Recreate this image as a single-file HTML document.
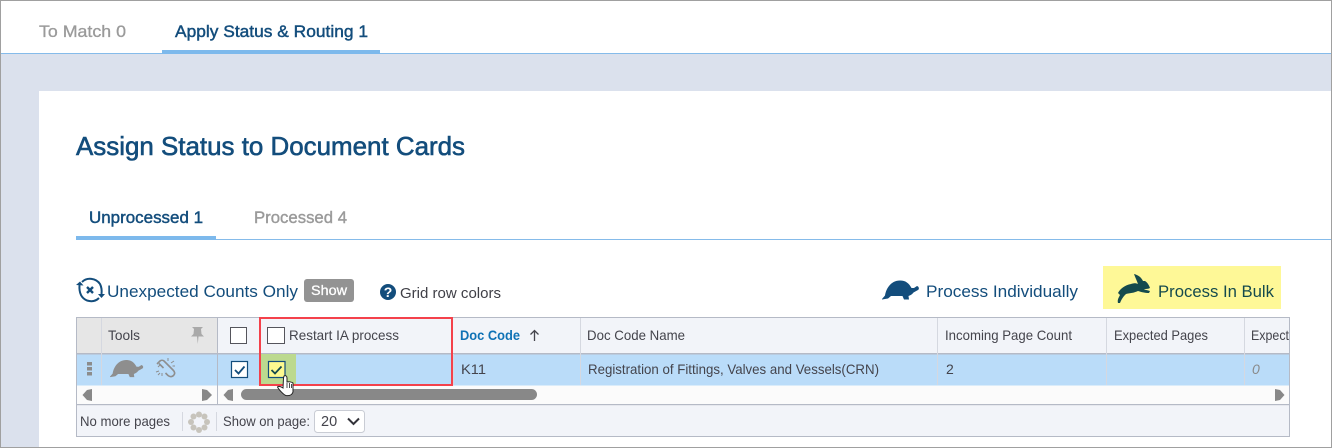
<!DOCTYPE html>
<html><head><meta charset="utf-8"><style>
html,body{margin:0;padding:0;background:#fff;overflow:hidden}
svg{display:block}
text{font-family:"Liberation Sans",sans-serif}
</style></head><body>
<svg xmlns="http://www.w3.org/2000/svg" width="1332" height="448" viewBox="0 0 1332 448">
<defs>
<path id="turtle" d="M0 18.500 L3 15 C4 8 9 0 18 0 C24 0 27 3 29.500 7.500 L32 7.500 L35 5.500 C37 6 37.500 8.500 36 9.500 L31.500 12 C30 14 28 15 26.500 15.500 L27 19 L22 19 L20.500 15.500 L9 15.500 L6 18 L0 19 Z"/>
<path id="rabbit" d="M2 29 C1 26 3 23 4 21 L2 19 C4 15 9 11 15 10 C18 9 20 9 22 10 C21 7 19 3 18 0 C22 1 25 3 27 7 L29 7 C31 8 33 11 34 14 C32 15 30 15 28 15 C29 16 31 16 34 17 L33 19 C29 19 25 18 22 17 C18 19 14 19 10 20 C8 22 6 24 4 29 Z"/>
</defs>
<rect width="1332" height="448" fill="#fff"/>
<!-- band -->
<rect x="0" y="54" width="1332" height="394" fill="#dbe1ed"/>
<rect x="39" y="91" width="1293" height="357" fill="#fff"/>
<rect x="0" y="53" width="1332" height="1" fill="#85bbea"/>
<rect x="162" y="50" width="218" height="4" fill="#7db9ec"/>
<!-- window border -->
<rect x="0.500" y="0.500" width="1331" height="447" fill="none" stroke="#a0a0a0"/>
<!-- top tabs -->
<text x="39" y="37" font-size="17" fill="#9a9a9a" stroke="#9a9a9a" stroke-width=".3" textLength="87" lengthAdjust="spacingAndGlyphs">To Match 0</text>
<text x="175" y="37" font-size="17" fill="#134d7c" stroke="#134d7c" stroke-width=".45" textLength="193" lengthAdjust="spacingAndGlyphs">Apply Status &amp; Routing 1</text>
<!-- title -->
<text x="76" y="155" font-size="26" fill="#134d7c" stroke="#134d7c" stroke-width=".6" textLength="389" lengthAdjust="spacingAndGlyphs">Assign Status to Document Cards</text>
<!-- subtabs -->
<rect x="76" y="239" width="1255" height="1" fill="#85bbea"/>
<rect x="76" y="236" width="140" height="4" fill="#7db9ec"/>
<text x="89" y="223" font-size="17" fill="#134d7c" stroke="#134d7c" stroke-width=".45" textLength="114" lengthAdjust="spacingAndGlyphs">Unprocessed 1</text>
<text x="254" y="223" font-size="17" fill="#9a9a9a" stroke="#9a9a9a" stroke-width=".4" textLength="93" lengthAdjust="spacingAndGlyphs">Processed 4</text>
<!-- toolbar left -->
<g fill="none" stroke="#134d7c" stroke-width="2">
<path d="M79.500 285 C79 292 81 298 87 300.500 C92 302 96 301 99 298"/>
<path d="M82 282 C87 277 96 278 100 284 C101.500 287 102 290 101.500 294"/>
</g>
<path d="M76 285 L80 281.500 L83.500 285.500 Z M98 294 L105 294 L101.500 298 Z" fill="#134d7c"/>
<path d="M87 287 L93 293 M93 287 L87 293" stroke="#134d7c" stroke-width="2.400" fill="none"/>
<text x="107" y="297" font-size="17" fill="#134d7c" textLength="191" lengthAdjust="spacingAndGlyphs">Unexpected Counts Only</text>
<rect x="304" y="279" width="50" height="23" rx="3" fill="#939393"/>
<text x="311" y="295" font-size="14" fill="#fff" stroke="#fff" stroke-width=".3" textLength="36" lengthAdjust="spacingAndGlyphs">Show</text>
<circle cx="388" cy="292" r="8" fill="#134d7c"/>
<text x="388" y="297" font-size="14" font-weight="bold" fill="#fff" text-anchor="middle">?</text>
<text x="400" y="298" font-size="15" fill="#3f3f46" textLength="101" lengthAdjust="spacingAndGlyphs">Grid row colors</text>
<!-- toolbar right -->
<use href="#turtle" x="882" y="280.500" fill="#134d7c"/>
<text x="926" y="297" font-size="17" fill="#134d7c" textLength="152" lengthAdjust="spacingAndGlyphs">Process Individually</text>
<rect x="1103" y="266" width="178" height="43" fill="#fef897"/>
<use href="#rabbit" x="1116" y="274" fill="#154a4d"/>
<text x="1158" y="297" font-size="17" fill="#154a4d" textLength="116" lengthAdjust="spacingAndGlyphs">Process In Bulk</text>
<!-- grid -->
<rect x="76.500" y="317.500" width="1213" height="119" fill="#f2f4f9" stroke="#b5bac6"/>
<rect x="77" y="318" width="140" height="35" fill="#e6e6e6"/>
<rect x="77" y="354" width="1212" height="31.500" fill="#badcf9"/>
<rect x="77" y="385.500" width="1212" height="18.500" fill="#fbfbfb"/>
<rect x="77" y="353" width="1212" height="1.500" fill="#b5bac6"/>
<rect x="77" y="404" width="1212" height="1.200" fill="#b5bac6"/>
<g fill="#d5d8e0">
<rect x="101" y="318" width="1" height="67"/>
<rect x="580" y="318" width="1" height="67"/>
<rect x="937" y="318" width="1" height="67"/>
<rect x="1106" y="318" width="1" height="67"/>
<rect x="1244" y="318" width="1" height="67"/>
<rect x="453" y="354" width="1" height="31"/>
</g>
<rect x="217" y="318" width="1" height="86" fill="#b5bac6"/>
<!-- header -->
<g font-size="14" fill="#44444c">
<text x="108" y="340" textLength="32" lengthAdjust="spacingAndGlyphs">Tools</text>
<text x="289" y="340" textLength="110" lengthAdjust="spacingAndGlyphs">Restart IA process</text>
<text x="587" y="340" textLength="98" lengthAdjust="spacingAndGlyphs">Doc Code Name</text>
<text x="945" y="340" textLength="127" lengthAdjust="spacingAndGlyphs">Incoming Page Count</text>
<text x="1114" y="340" textLength="94" lengthAdjust="spacingAndGlyphs">Expected Pages</text>
<text x="1251" y="340" textLength="38" lengthAdjust="spacingAndGlyphs">Expect</text>
</g>
<rect x="1289" y="318" width="1" height="119" fill="#b5bac6"/>
<text x="460" y="340" font-size="14" font-weight="bold" fill="#0f72b5" textLength="60" lengthAdjust="spacingAndGlyphs">Doc Code</text>
<path d="M534.500 341 V331 M530.500 334.500 L534.500 330.500 L538.500 334.500" fill="none" stroke="#44444c" stroke-width="1.300"/>
<path d="M192 327 H203 L201 329 L201.500 334 L204 336.500 H198.500 L197.800 344 L197 336.500 H191 L193.500 334 L194 329 Z" fill="#a9a9a9"/>
<rect x="230.500" y="327.500" width="16" height="16" fill="#fff" stroke="#55555c"/>
<rect x="267.500" y="327.500" width="17" height="16" fill="#fff" stroke="#55555c"/>
<!-- row -->
<g fill="#8c8c8c">
<rect x="87" y="362" width="5" height="3.500"/><rect x="87" y="367" width="5" height="3.500"/><rect x="87" y="372" width="5" height="3.500"/>
</g>
<use href="#turtle" transform="translate(110 360) scale(.9)" fill="#8e8e8e"/>
<g fill="none" stroke="#8e8e8e" stroke-width="1.600">
<path d="M157 364 L160 361 C161 360 163 360 164 361 L173 370 C175 372 175 374 173.500 375.500 C172 377 170 377 168 375.500 L165.500 373"/>
<path d="M163.500 368 L159 363.500"/>
<path d="M160 365 L158 367 M168 361 L168 358 M171 363 L174 361 M172.500 366 L175 366 M156 372 L159 371 M158 375 L160 373 M162 376 L162 373" stroke-width="1"/>
</g>
<rect x="231.500" y="361.500" width="16" height="16" fill="#fff" stroke="#134d7c" stroke-width="1.200"/>
<path d="M235 370 L238.500 373.500 L244.500 366.500" fill="none" stroke="#134d7c" stroke-width="1.800"/>
<rect x="261" y="354" width="35" height="31" fill="#bcd98f"/>
<rect x="268.500" y="361.500" width="16.500" height="16" fill="#fdf98f" stroke="#134d7c" stroke-width="1.200"/>
<path d="M271.500 370 L275 373.500 L281.500 366.500" fill="none" stroke="#154a4d" stroke-width="1.800"/>
<g font-size="14" fill="#44444c">
<text x="461" y="374" textLength="25" lengthAdjust="spacingAndGlyphs">K11</text>
<text x="588" y="374" textLength="291" lengthAdjust="spacingAndGlyphs">Registration of Fittings, Valves and Vessels(CRN)</text>
<text x="946" y="374">2</text>
</g>
<text x="1252" y="374" font-size="14" font-style="italic" fill="#8a8a8a">0</text>
<!-- scrollbars -->
<g fill="#888">
<path d="M82.500 395 L87 390 L92 389 V401 L87 400 Z"/>
<path d="M212 395 L207 390 L202 389 V401 L207 400 Z"/>
<path d="M223.500 395 L228 390 L233 389 V401 L228 400 Z"/>
<path d="M1284.500 395 L1280 390 L1275 389 V401 L1280 400 Z"/>
<rect x="241" y="389" width="296" height="11" rx="5.500"/>
</g>
<!-- red box -->
<rect x="260" y="318" width="192" height="67" fill="none" stroke="#f4414b" stroke-width="2"/>
<!-- hand cursor -->
<path d="M284 376 C285.500 375 287 376 287 378 V382 C289 381.500 292 382 293 383 V392 C292 395 290 396 286 395.500 C284 395 279 390 277.500 387 C278 386 280 386 283 388 L283.500 378 Z" fill="#fff" stroke="#222" stroke-width="1"/>
<path d="M287 383 V388 M289.500 383 V388 M291.500 384 V388" stroke="#222" stroke-width=".8"/>
<!-- footer -->
<text x="80" y="426" font-size="14" fill="#44444c" textLength="90" lengthAdjust="spacingAndGlyphs">No more pages</text>
<rect x="182" y="412" width="1" height="19" fill="#d5d8e0"/>
<rect x="216" y="412" width="1" height="19" fill="#d5d8e0"/>
<g fill="#c7c4bc">
<circle cx="199" cy="414.500" r="3"/><circle cx="204.500" cy="416.500" r="3"/><circle cx="207" cy="422" r="3"/><circle cx="204.500" cy="427.500" r="3"/><circle cx="199" cy="430" r="3"/><circle cx="193.500" cy="427.500" r="3"/><circle cx="191" cy="422" r="3"/><circle cx="193.500" cy="416.500" r="3"/>
</g>
<text x="223" y="426" font-size="14" fill="#44444c" textLength="87" lengthAdjust="spacingAndGlyphs">Show on page:</text>
<rect x="314.500" y="410.500" width="50" height="22" rx="3" fill="#fff" stroke="#c9ccd4"/>
<text x="321" y="426" font-size="14.500" fill="#44444c">20</text>
<path d="M348 418.500 L353.500 424 L359 418.500" fill="none" stroke="#33333a" stroke-width="2"/>
</svg>
</body></html>
